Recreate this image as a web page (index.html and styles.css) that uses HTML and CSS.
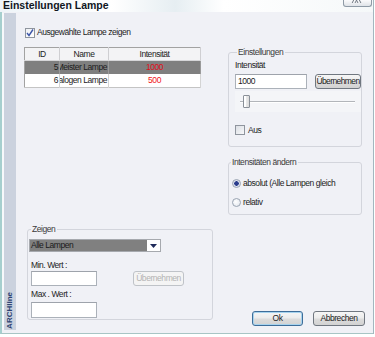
FILE: index.html
```html
<!DOCTYPE html>
<html>
	<head>
		<meta charset="utf-8">
		<link rel="stylesheet" href="styles.css">
	</head>
	<body>
		<div class="window">
			<div class="titlebar">
				<span class="title">Einstellungen Lampe</span>
				<span class="close">
					<svg width="29" height="7" viewBox="0 0 29 7"><path d="M11.5 0 L9.5 4 M13.5 0 L15.5 4 M14.5 0 L12.5 4 M16.5 0 L18.5 4" stroke="#6d7580" stroke-width="1" fill="none"/></svg>
				</span>
			</div>
			<div class="frame">
				<div class="side"><span class="side-label">ARCHline</span></div>
				<div class="content">
					<div class="col-left">
						<label class="check-row top-check">
							<span class="check checked">
								<svg width="8" height="8" viewBox="0 0 8 8"><path d="M1 4 L3 6.5 L7 0.5" stroke="#3d56a8" stroke-width="1.4" fill="none"/></svg>
							</span>
							<span>Ausgewählte Lampe zeigen</span>
						</label>

						<table class="grid">
							<thead>
								<tr><th class="c-id">ID</th><th class="c-name">Name</th><th class="c-int">Intensität</th></tr>
							</thead>
							<tbody>
								<tr class="selected">
									<td class="c-id">5</td>
									<td class="c-name"><div class="clip">Meister Lampe</div></td>
									<td class="c-int red">1000</td>
								</tr>
								<tr>
									<td class="c-id">6</td>
									<td class="c-name"><div class="clip">Halogen Lampe</div></td>
									<td class="c-int red">500</td>
								</tr>
							</tbody>
						</table>

						<fieldset class="group group-zeigen">
							<legend>Zeigen</legend>
							<div class="combo">
								<span class="combo-value">Alle Lampen</span>
								<span class="combo-arrow"><svg width="7" height="4" viewBox="0 0 7 4"><path d="M0 0 H7 L3.5 4 Z" fill="#1e2a5a"/></svg></span>
							</div>
							<div class="field-label min-label">Min. Wert :</div>
							<div class="field-row">
								<span class="textbox small"></span>
								<span class="button disabled apply-zeigen">Übernehmen</span>
							</div>
							<div class="field-label max-label">Max . Wert :</div>
							<div class="field-row">
								<span class="textbox small tall"></span>
							</div>
						</fieldset>
					</div>

					<div class="col-right">
						<fieldset class="group group-settings">
							<legend>Einstellungen</legend>
							<div class="field-label">Intensität</div>
							<div class="field-row">
								<span class="textbox value-box">1000</span>
								<span class="button apply">Übernehmen</span>
							</div>
							<div class="slider">
								<span class="track"></span>
								<span class="thumb"></span>
							</div>
							<label class="check-row aus">
								<span class="check"></span>
								<span>Aus</span>
							</label>
						</fieldset>

						<fieldset class="group group-mode">
							<legend>Intensitäten ändern</legend>
							<label class="radio-row first">
								<span class="radio on"></span>
								<span>absolut (Alle Lampen gleich</span>
							</label>
							<label class="radio-row">
								<span class="radio"></span>
								<span>relativ</span>
							</label>
						</fieldset>

						<div class="actions">
							<span class="button default ok">Ok</span>
							<span class="button cancel">Abbrechen</span>
						</div>
					</div>
				</div>
			</div>
		</div>
	</body>
</html>
```

FILE: styles.css
```css
body {
	margin: 0;
	background: #ffffff;
	font-family: "Liberation Sans", Arial, sans-serif;
	font-size: 8.5px;
	letter-spacing: -0.45px;
	color: #1c1c1c;
}

.window {
	width: 374px;
	height: 334px;
	box-sizing: border-box;
	border-right: 1px solid #a3b7bf;
	display: flex;
	flex-direction: column;
}

.titlebar {
	height: 12px;
	display: flex;
	justify-content: space-between;
	background: linear-gradient(to right, #eef4f8, #ffffff 30%, #e6eef2 47%, #ffffff 60%, #f5f8f9);
}

.title {
	padding-left: 3px;
	font: bold 10.5px "Liberation Sans", Arial, sans-serif;
	letter-spacing: 0;
	line-height: 11px;
	color: #10161e;
}

.close {
	width: 29px;
	height: 7px;
	margin-right: 1px;
	box-sizing: border-box;
	border: 1px solid #8e9aa6;
	border-top: none;
	border-radius: 0 0 3px 3px;
	background: linear-gradient(#fbfbfc, #dfe3e8);
	display: flex;
}

.close svg {
	margin: -1px 0 0 -1px;
}

.frame {
	flex: 1;
	display: flex;
	background: #f0f1f6;
	border-left: 2px solid #a6cfce;
	border-bottom: 1px solid #a8c5c5;
}

.side {
	width: 12px;
	margin: 1px 0 3px 0;
	border-left: 2px solid #f7f9fb;
	background: #cbd2de;
	display: flex;
	align-items: flex-end;
	justify-content: center;
}

.side-label {
	writing-mode: vertical-rl;
	transform: rotate(180deg);
	font: bold 8px "Liberation Sans", Arial, sans-serif;
	letter-spacing: 0;
	color: #2c4372;
	padding: 1px 0;
	line-height: 10px;
}

.content {
	flex: 1;
	display: flex;
	padding-left: 8px;
}

.col-left {
	width: 189px;
	display: flex;
	flex-direction: column;
}

.col-right {
	width: 134px;
	margin-left: 15px;
	display: flex;
	flex-direction: column;
}

/* checkboxes and radios */

.check-row,
.radio-row {
	display: flex;
	align-items: center;
	height: 11px;
	line-height: 11px;
}

.top-check {
	margin: 15px 0 0 1px;
}

.check {
	width: 10px;
	height: 10px;
	box-sizing: border-box;
	border: 1px solid #8f959e;
	background: linear-gradient(135deg, #dcdfe4, #f7f8fa);
	margin-right: 2px;
	display: flex;
	align-items: center;
	justify-content: center;
}

.check.checked {
	background: linear-gradient(135deg, #eef0f4, #ffffff);
}

.radio {
	width: 9px;
	height: 9px;
	box-sizing: border-box;
	border: 1px solid #9aa4b2;
	border-radius: 50%;
	background: radial-gradient(circle at 40% 40%, #ffffff, #dde2ea);
	margin-right: 2px;
}

.radio.on {
	background: radial-gradient(circle, #2a3c8c 0 2px, #d8dded 2.5px, #eef0f6);
}

.radio-row {
	margin-left: 3px;
}

.radio-row.first {
	margin-top: 10px;
	margin-bottom: 8px;
}

/* list */

.grid {
	margin-top: 9px;
	width: 177px;
	border-collapse: collapse;
	border: 1px solid #a2a2a2;
	border-bottom-color: #c4c4c4;
	table-layout: fixed;
	background: #ffffff;
}

.grid th {
	height: 12px;
	padding: 0;
	font-weight: normal;
	background: #f3f3f5;
	border-right: 1px solid #cfcfd2;
	border-bottom: 1px solid #d6d6d8;
	line-height: 12px;
}

.grid td {
	height: 13px;
	padding: 0;
	line-height: 13px;
	border-right: 1px solid #d4d4d4;
}

.grid .c-id {
	width: 34px;
	text-align: right;
	padding-right: 1px;
}

.grid th.c-id {
	text-align: center;
	padding-right: 0;
}

.grid .c-name {
	width: 48px;
}

.grid .c-int {
	text-align: center;
}

.grid .selected td {
	background: #7f7f7f;
	border-right-color: #9a9a9a;
}

.grid .red {
	color: #f0141a;
}

.grid .selected .red {
	color: #e0101a;
}

.clip {
	display: flex;
	justify-content: flex-end;
	overflow: hidden;
	white-space: nowrap;
	padding-right: 1px;
}

/* group boxes */

.group {
	margin: 0;
	padding: 0;
	border: 1px solid #d3d5dc;
	border-radius: 3px;
}

.group legend {
	padding: 0 2px 0 1px;
	margin-left: 2px;
	line-height: 11px;
	color: #3a3a3a;
}

.group-settings {
	margin-top: 35px;
	padding: 2px 0 11px 6px;
}

.group-mode {
	margin-top: 10px;
	padding: 0 0 6px 0;
}

.group-zeigen {
	margin: auto 0 13px 3px;
	padding: 0 0 1px 1px;
	width: 186px;
	box-sizing: border-box;
}

.field-label {
	line-height: 11px;
	height: 11px;
}

.field-row {
	display: flex;
	margin-top: 3px;
}

.textbox {
	width: 72px;
	height: 15px;
	box-sizing: border-box;
	border: 1px solid #abb1b9;
	border-top-color: #9ea3ab;
	background: #ffffff;
	padding-left: 2px;
	line-height: 13px;
}

.textbox.small {
	width: 66px;
	margin-left: 2px;
}

.textbox.tall {
	height: 16px;
}

.button {
	height: 15px;
	box-sizing: border-box;
	border: 1px solid #707780;
	border-radius: 3px;
	background: linear-gradient(#f6f6f6 0, #ececec 45%, #dcdcdc 55%, #d2d2d2 100%);
	text-align: center;
	line-height: 13px;
	color: #1c1c1c;
	white-space: nowrap;
	overflow: hidden;
}

.apply {
	width: 46px;
	margin-left: 8px;
	letter-spacing: -0.6px;
}

.button.disabled {
	border-color: #bfc3c8;
	background: #f4f4f4;
	color: #b3b3b3;
}

.apply-zeigen {
	width: 51px;
	margin-left: 36px;
}

.slider {
	margin-top: 2px;
	height: 21px;
	display: flex;
	align-items: center;
	background: #f4f5f8;
	padding-left: 5px;
}

.track {
	width: 115px;
	height: 2px;
	box-sizing: border-box;
	border-top: 1px solid #b2b5ba;
	border-bottom: 1px solid #ffffff;
}

.thumb {
	width: 7px;
	height: 13px;
	box-sizing: border-box;
	margin-left: -112px;
	border: 1px solid #8a9098;
	border-radius: 1px;
	background: linear-gradient(to right, #f4f4f4, #dcdcdc);
	box-shadow: inset 2px 0 0 #ffffff;
}

.aus {
	margin-top: 13px;
	height: 10px;
}

.aus .check {
	margin-right: 3px;
}

/* zeigen box */

.combo {
	margin-top: 4px;
	height: 13px;
	width: 132px;
	box-sizing: border-box;
	border: 1px solid #a6a9ae;
	display: flex;
	background: #ffffff;
}

.combo-value {
	flex: 1;
	background: #808080;
	color: #1a1a1a;
	line-height: 11px;
	padding-left: 1px;
}

.combo-arrow {
	width: 13px;
	display: flex;
	align-items: center;
	justify-content: center;
}

.min-label {
	margin: 8px 0 0 2px;
}

.max-label {
	margin: 3px 0 0 2px;
}

.min-label + .field-row {
	margin-top: 0;
}

.max-label + .field-row {
	margin-top: 2px;
}

/* footer buttons */

.actions {
	margin: auto -3px 7px 0;
	display: flex;
	justify-content: flex-end;
	gap: 10px;
}

.ok {
	width: 51px;
	border-color: #3d6d99;
	box-shadow: inset 0 0 0 1px #a7d3ee;
}

.cancel {
	width: 52px;
}
```
